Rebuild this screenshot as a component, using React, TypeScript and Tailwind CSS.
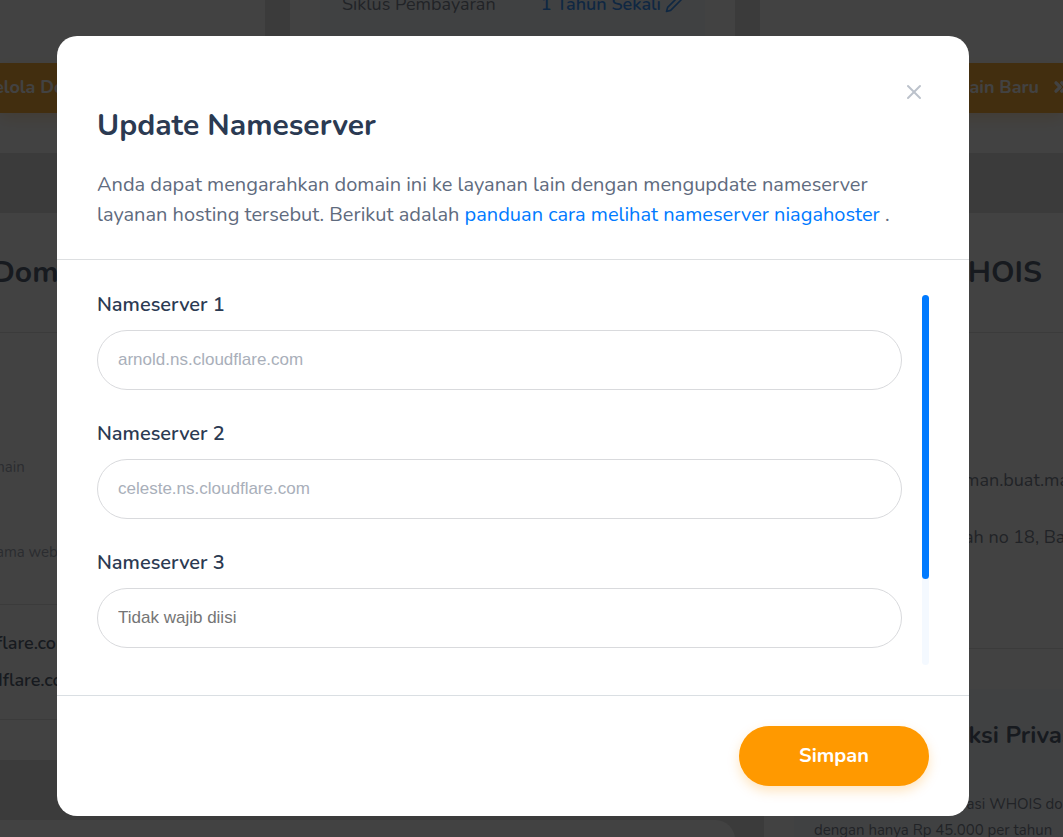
import React from "react";
import { ChevronsRight, X } from "lucide-react";

type Field = { id: string; label: string; value?: string; placeholder?: string };

const fields: Field[] = [
  { id: "ns1", label: "Nameserver 1", value: "arnold.ns.cloudflare.com" },
  { id: "ns2", label: "Nameserver 2", value: "celeste.ns.cloudflare.com" },
  { id: "ns3", label: "Nameserver 3", placeholder: "Tidak wajib diisi" },
];

function PencilIcon() {
  return (
    <svg
      width="18"
      height="18"
      viewBox="0 0 24 24"
      fill="none"
      stroke="currentColor"
      strokeWidth="2.2"
      strokeLinejoin="round"
      className="mt-[3px]"
    >
      <path d="M17 3a2.83 2.83 0 1 1 4 4L7.5 20.5 2 22l1.5-5.5Z" />
    </svg>
  );
}

function DashboardPage() {
  return (
    <div aria-hidden="true" className="flex h-screen flex-col gap-[60px] overflow-hidden whitespace-nowrap bg-[#dcdcdc]">
      <div className="grid h-[153px] shrink-0 grid-cols-[265px_445px_1fr] gap-[25px]">
        <section className="overflow-hidden bg-white pt-[63px]">
          <div className="h-[50px] bg-[#ff9900] pt-3 text-lg leading-6 font-bold text-white shadow-[0_6px_15px_rgba(255,153,0,0.25)]">
            <span className="-ml-1.5">elola Domain</span>
          </div>
        </section>
        <section className="bg-white px-[30px]">
          <div className="flex h-[60px] justify-between rounded-b-xl bg-[#f4f9ff] px-[22px] text-lg leading-6">
            <span className="-mt-2 text-[#5b6577]">Siklus Pembayaran</span>
            <span className="-mt-2 flex items-start gap-1 font-semibold text-[#007aff]">
              1 Tahun Sekali
              <PencilIcon />
            </span>
          </div>
        </section>
        <section className="overflow-hidden bg-white pt-[63px]">
          <div className="flex h-[50px] items-start justify-end gap-3 bg-[#ff9900] pt-3 text-lg leading-6 font-bold text-white shadow-[0_6px_15px_rgba(255,153,0,0.25)]">
            Domain Baru
            <ChevronsRight size={20} strokeWidth={4} className="-mr-2 mt-[2px]" />
          </div>
        </section>
      </div>

      <div className="grid min-h-0 flex-1 grid-cols-[735px_1fr] gap-[29px]">
        <div className="flex min-h-0 flex-col gap-[60px]">
          <section className="h-[547px] shrink-0 overflow-hidden rounded-tr-[20px] bg-white text-[#2b3a52]">
            <div className="h-[120px] border-b border-[#dddddd] pt-[42px]">
              <h2 className="-ml-2 text-3xl leading-9 font-bold">Domain</h2>
            </div>
            <div className="flex h-[272px] flex-col gap-[61px] border-b border-[#dddddd] pt-[122px] text-[15px] leading-6 text-[#8a93a3]">
              <span className="-ml-2">main</span>
              <span className="-ml-1">ama website</span>
            </div>
            <div className="flex h-[115px] flex-col gap-[13px] border-b border-[#dddddd] pt-[26px] text-lg leading-6 font-semibold">
              <span className="-ml-1">flare.com</span>
              <span className="-ml-2">dflare.com</span>
            </div>
          </section>
          <section className="h-20 shrink-0 rounded-tr-[20px] bg-white" />
        </div>

        <section className="min-w-0 overflow-hidden bg-white text-[#2b3a52]">
          <div className="h-[120px] border-b border-[#dddddd] pt-[42px] pr-[21px] text-right">
            <h2 className="text-3xl leading-9 font-bold">WHOIS</h2>
          </div>
          <div className="flex h-[316px] flex-col gap-[33px] border-b border-[#dddddd] pt-[135px] pl-[200px] text-lg leading-6 text-[#5b6577]">
            <span>man.buat.mana</span>
            <span>ah no 18, Bandung</span>
          </div>
          <div className="pt-10 pl-[30px]">
            <div className="h-[200px] bg-[#f4f9ff] pt-8 pl-5">
              <h3 className="pl-[94px] text-2xl leading-7 font-bold">Proteksi Privasi</h3>
              <p className="pt-[42px] text-[15px] leading-[26px] text-[#5b6577]">
                Dapatkan Proteksi Privasi WHOIS domain
                <br />
                dengan hanya Rp 45.000 per tahun
              </p>
            </div>
          </div>
        </section>
      </div>
    </div>
  );
}

function NameserverField({ id, label, value, placeholder }: Field) {
  return (
    <div className="flex flex-col gap-[10px]">
      <label htmlFor={id} className="text-xl leading-[30px] font-semibold text-[#2b3a52]">
        {label}
      </label>
      <input
        id={id}
        type="text"
        defaultValue={value}
        placeholder={placeholder}
        className="h-[60px] w-full rounded-full border border-[#d9dadd] bg-white px-5 font-['Liberation_Sans',Arial,sans-serif] text-[17px] text-[#a9afba] outline-none placeholder:text-[#757575]"
      />
    </div>
  );
}

function NameserverModal() {
  return (
    <div className="fixed inset-0 flex items-start justify-center overflow-hidden bg-[#131313]/80 py-9 pr-[37px]">
      <div
        role="dialog"
        aria-modal="true"
        aria-labelledby="modal-title"
        className="w-full max-w-[912px] rounded-[20px] bg-white"
      >
        <header className="border-b border-[#dddfe1] px-10 pt-11 pb-[29px]">
          <div className="flex justify-end">
            <button type="button" aria-label="Tutup" className="flex h-6 w-[30px] items-center justify-center text-[#bcc2cb]">
              <X size={24} strokeWidth={2} />
            </button>
          </div>
          <h1 id="modal-title" className="text-3xl leading-[44px] font-bold text-[#2b3a52]">
            Update Nameserver
          </h1>
          <p className="pt-[22px] text-xl leading-[30px] text-[#5f6b7e]">
            Anda dapat mengarahkan domain ini ke layanan lain dengan mengupdate nameserver layanan hosting tersebut. Berikut adalah{" "}
            <a href="#panduan" className="text-[#007aff]">
              panduan cara melihat nameserver niagahoster
            </a>{" "}
            .
          </p>
        </header>

        <div className="flex gap-5 px-10 pt-[30px] pb-[30px]">
          <div className="flex flex-1 flex-col gap-[29px] pb-[17px]">
            {fields.map((field) => (
              <NameserverField key={field.id} {...field} />
            ))}
          </div>
          <div className="mt-[5px] w-[7px] self-stretch rounded-full bg-[#f4f9ff]">
            <div className="h-[284px] rounded-full bg-[#007aff]" />
          </div>
        </div>

        <footer className="flex justify-end border-t border-[#dadfe3] px-10 py-[30px]">
          <button
            type="button"
            className="h-[60px] rounded-full bg-[#ff9900] px-[60px] text-xl font-bold text-white shadow-[0_5px_12px_rgba(255,153,0,0.25)]"
          >
            Simpan
          </button>
        </footer>
      </div>
    </div>
  );
}

export default function App() {
  return (
    <div className="font-[Nunito,Lato,sans-serif]">
      <DashboardPage />
      <NameserverModal />
    </div>
  );
}
